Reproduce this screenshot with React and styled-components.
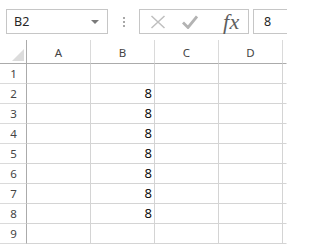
import React from "react";
import styled, { createGlobalStyle } from "styled-components";

const Global = createGlobalStyle`
  html, body { margin: 0; padding: 0; background: #fff; }
  body { width: 287px; height: 244px; overflow: hidden; }
`;

const Page = styled.div`
  width: 287px;
  height: 244px;
  background: #fff;
  display: flex;
  flex-direction: column;
  font-family: "Noto Sans", "Open Sans", sans-serif;
  overflow: hidden;
`;

const Toolbar = styled.div`
  height: 40px;
  display: flex;
  align-items: flex-start;
  padding-top: 9px;
  padding-left: 6px;
  box-sizing: border-box;
`;

const NameBox = styled.div`
  width: 102px;
  height: 25px;
  box-sizing: border-box;
  border: 1px solid #c6c6c6;
  display: flex;
  align-items: center;
  justify-content: space-between;
  padding: 0 8px 0 7px;
  font-size: 12.5px;
  color: #262626;
`;

const Caret = styled.span`
  width: 0;
  height: 0;
  border-left: 4px solid transparent;
  border-right: 4px solid transparent;
  border-top: 4px solid #7a7a7a;
  margin-top: 1px;
`;

const Grip = styled.div`
  width: 31px;
  height: 25px;
  display: flex;
  flex-direction: column;
  align-items: center;
  justify-content: center;
  gap: 2px;
`;

const Dot = styled.span`
  width: 2px;
  height: 2px;
  background: #a8a8a8;
`;

const ButtonBox = styled.div`
  width: 110px;
  height: 25px;
  box-sizing: border-box;
  border: 1px solid #c6c6c6;
  display: flex;
  align-items: center;
  padding-left: 9px;
`;

const IconSlot = styled.span`
  display: flex;
  align-items: center;
  justify-content: center;
  width: 18px;
  height: 23px;
  margin-left: ${(p) => p.$gap || 0}px;
`;

const Fx = styled.span`
  font-family: "Liberation Serif", "DejaVu Serif", serif;
  font-style: italic;
  font-size: 22px;
  color: #5e5e5e;
  line-height: 23px;
  margin-left: 24px;
  letter-spacing: 0.5px;
`;

const FormulaInput = styled.div`
  flex: 1;
  margin-left: 4px;
  height: 25px;
  box-sizing: border-box;
  border: 1px solid #c6c6c6;
  border-right: none;
  display: flex;
  align-items: center;
  padding-left: 10px;
  font-size: 12.5px;
  color: #262626;
`;

const Sheet = styled.div`
  display: grid;
  grid-template-columns: 27px repeat(4, 64px) 1fr;
  grid-template-rows: 24px repeat(9, 20px);
  border-left: 2px solid #e9ecf0;
  margin-left: -2px;
`;

const Corner = styled.div`
  box-sizing: border-box;
  border-right: 1px solid #ababab;
  border-bottom: 1px solid #ababab;
  display: flex;
  align-items: flex-end;
  justify-content: flex-end;
  padding: 0 2px 2px 0;
`;

const ColHead = styled.div`
  box-sizing: border-box;
  border-right: 1px solid ${(p) => (p.$last ? "transparent" : "#dadada")};
  border-bottom: 1px solid #ababab;
  display: flex;
  align-items: center;
  justify-content: center;
  font-size: 11.5px;
  color: #444;
  padding-top: 2px;
`;

const RowHead = styled.div`
  box-sizing: border-box;
  border-right: 1px solid #ababab;
  border-bottom: 1px solid #dadada;
  display: flex;
  align-items: center;
  justify-content: center;
  font-size: 11.5px;
  color: #444;
  padding-left: 1px;
`;

const Cell = styled.div`
  box-sizing: border-box;
  border-right: 1px solid ${(p) => (p.$last ? "transparent" : "#d4d4d4")};
  border-bottom: 1px solid #d4d4d4;
  display: flex;
  align-items: flex-end;
  justify-content: flex-end;
  padding: 0 2px 1px 0;
  font-family: "Open Sans", "Noto Sans", sans-serif;
  font-size: 13px;
  line-height: 17px;
  color: #000;
`;

const cols = ["A", "B", "C", "D", ""];
const rows = [1, 2, 3, 4, 5, 6, 7, 8, 9];

export default function App() {
  return (
    <Page>
      <Global />
      <Toolbar>
        <NameBox>
          <span>B2</span>
          <Caret />
        </NameBox>
        <Grip>
          <Dot />
          <Dot />
          <Dot />
        </Grip>
        <ButtonBox>
          <IconSlot>
            <svg width="16" height="14" viewBox="0 0 16 14">
              <path d="M1.5 1 L14.5 13 M14.5 1 L1.5 13" stroke="#bfbfbf" strokeWidth="1.5" fill="none" />
            </svg>
          </IconSlot>
          <IconSlot $gap={14}>
            <svg width="16" height="14" viewBox="0 0 16 14">
              <path d="M1 7.5 L6 12.5 L15 1.5" stroke="#b3b3b3" strokeWidth="2.8" fill="none" strokeLinejoin="miter" />
            </svg>
          </IconSlot>
          <Fx>fx</Fx>
        </ButtonBox>
        <FormulaInput>8</FormulaInput>
      </Toolbar>
      <Sheet>
        <Corner>
          <svg width="12" height="12" viewBox="0 0 12 12">
            <path d="M12 0 L12 12 L0 12 Z" fill="#dcdcdc" />
          </svg>
        </Corner>
        {cols.map((c, i) => (
          <ColHead key={i} $last={i === cols.length - 1}>
            {c}
          </ColHead>
        ))}
        {rows.map((r) => (
          <React.Fragment key={r}>
            <RowHead>{r}</RowHead>
            {cols.map((c, i) => (
              <Cell key={i} $last={i === cols.length - 1}>
                {c === "B" && r >= 2 && r <= 8 ? "8" : ""}
              </Cell>
            ))}
          </React.Fragment>
        ))}
      </Sheet>
    </Page>
  );
}
